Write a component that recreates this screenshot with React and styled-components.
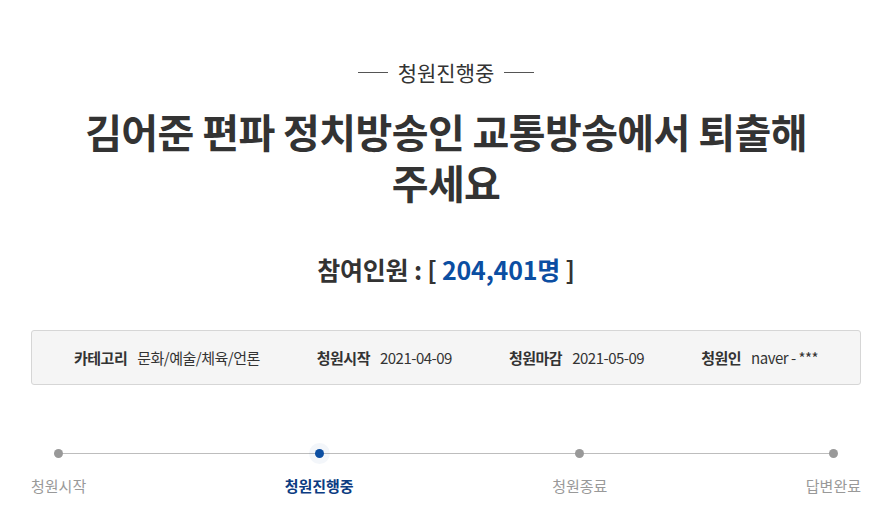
import React from "react";
import styled, { createGlobalStyle } from "styled-components";

const Global = createGlobalStyle`
  html, body { margin: 0; padding: 0; background: #fff; }
  body { font-family: "Noto Sans CJK KR", "Noto Sans", sans-serif; color: #333; }
`;

const Page = styled.div`
  width: 830px;
  margin: 0 auto;
  padding-top: 59px;
  display: flex;
  flex-direction: column;
  align-items: stretch;
`;

const Status = styled.div`
  display: flex;
  align-items: center;
  justify-content: center;
  gap: 10px;
  font-size: 21px;
  line-height: 26px;
  color: #333;
  &::before, &::after {
    content: "";
    width: 30px;
    height: 1px;
    background: #555;
  }
`;

const Title = styled.h1`
  margin: 21px 0 0;
  text-align: center;
  font-size: 40px;
  line-height: 51px;
  font-weight: 700;
  letter-spacing: -0.6px;
  color: #333;
`;

const Count = styled.h2`
  margin: 46px 0 0;
  text-align: center;
  font-size: 25px;
  line-height: 30px;
  font-weight: 700;
  letter-spacing: -0.2px;
  color: #333;
`;

const Num = styled.span`
  color: #0b4ea2;
`;

const InfoBox = styled.div`
  margin-top: 46px;
  height: 55px;
  box-sizing: border-box;
  border: 1px solid #d6d6d6;
  border-radius: 3px;
  background: #f5f5f5;
  display: flex;
  align-items: center;
  justify-content: center;
  gap: 57px;
`;

const InfoItem = styled.div`
  display: flex;
  align-items: center;
  gap: 10px;
  font-size: 15px;
  letter-spacing: -0.5px;
  color: #333;
`;

const InfoLabel = styled.span`
  font-weight: 700;
`;

const Progress = styled.div`
  position: relative;
  margin-top: 64px;
  display: flex;
  justify-content: space-between;
  &::before {
    content: "";
    position: absolute;
    left: 27px;
    right: 27px;
    top: 4px;
    height: 1px;
    background: #bdbdbd;
  }
`;

const Step = styled.div`
  position: relative;
  display: flex;
  flex-direction: column;
  align-items: center;
  gap: 18px;
`;

const Dot = styled.span`
  width: 9px;
  height: 9px;
  border-radius: 50%;
  background: ${(p) => (p.$active ? "#0b4ea2" : "#999")};
  box-shadow: ${(p) => (p.$active ? "0 0 0 6px rgba(11,78,162,0.05)" : "none")};
`;

const StepLabel = styled.span`
  font-size: 15px;
  line-height: 20px;
  letter-spacing: 0;
  color: ${(p) => (p.$active ? "#0c3c82" : "#999")};
  font-weight: ${(p) => (p.$active ? 700 : 400)};
`;

const steps = [
  { label: "청원시작" },
  { label: "청원진행중", active: true },
  { label: "청원종료" },
  { label: "답변완료" },
];

const info = [
  ["카테고리", "문화/예술/체육/언론"],
  ["청원시작", "2021-04-09"],
  ["청원마감", "2021-05-09"],
  ["청원인", "naver - ***"],
];

export default function App() {
  return (
    <>
      <Global />
      <Page>
        <Status>청원진행중</Status>
        <Title>
          김어준 편파 정치방송인 교통방송에서 퇴출해
          <br />
          주세요
        </Title>
        <Count>
          참여인원 : [ <Num>204,401명</Num> ]
        </Count>
        <InfoBox>
          {info.map(([k, v]) => (
            <InfoItem key={k}>
              <InfoLabel>{k}</InfoLabel>
              <span>{v}</span>
            </InfoItem>
          ))}
        </InfoBox>
        <Progress>
          {steps.map((s) => (
            <Step key={s.label}>
              <Dot $active={s.active} />
              <StepLabel $active={s.active}>{s.label}</StepLabel>
            </Step>
          ))}
        </Progress>
      </Page>
    </>
  );
}
